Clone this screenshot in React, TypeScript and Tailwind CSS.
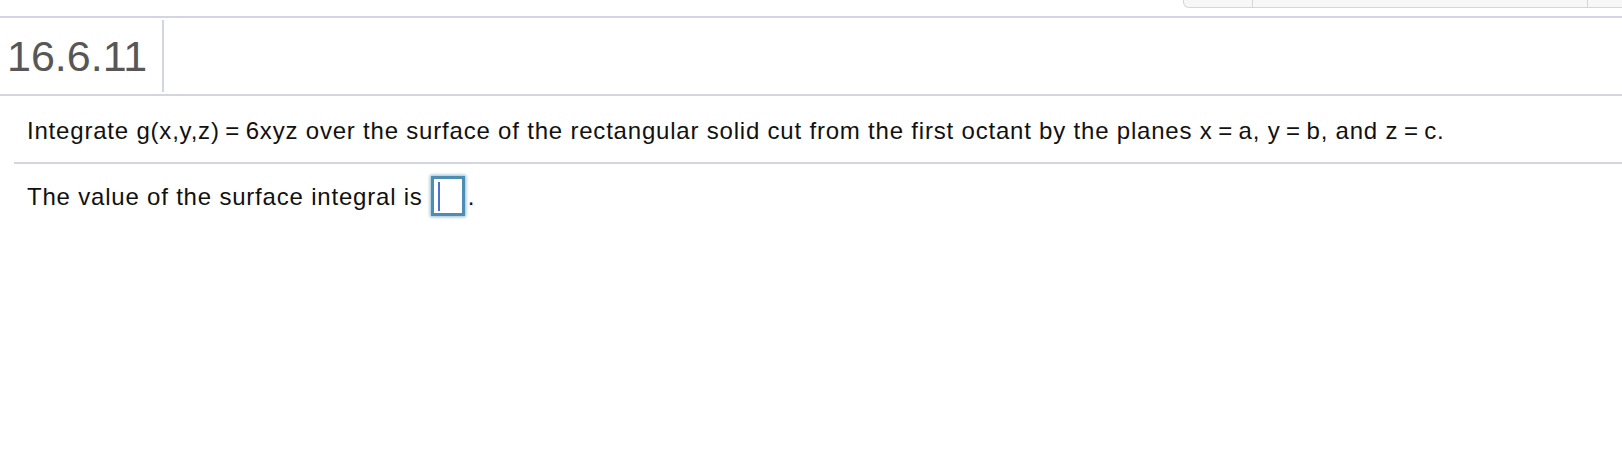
export default function App() {
  return (
    <div className="w-[1622px] h-[460px] bg-white overflow-hidden font-['Liberation_Sans',Arial,sans-serif] text-[#111]">
      {/* toolbar remnant */}
      <div className="h-[16px] flex justify-end">
        <div className="ml-auto mr-[-20px] w-[459px] h-[8px] flex bg-[#f7f7f7] border border-t-0 border-[#d6d6d6] rounded-bl-[6px]">
          <div className="w-[69px] border-r border-[#d6d6d6]" />
          <div className="w-[335px] border-r border-[#d6d6d6]" />
          <div className="flex-1" />
        </div>
      </div>
      <div className="h-[2px] bg-[#d3d6e0]" />

      {/* header */}
      <div className="h-[76px] flex items-center">
        <div className="w-[164px] h-[72px] flex items-center border-r-2 border-[#d3d6e0] pl-[7px]">
          <span className="text-[43px] leading-none text-[#575757]">16.6.11</span>
        </div>
      </div>
      <div className="h-[2px] bg-[#d3d6e0]" />

      {/* question */}
      <div className="pl-[27px] pt-[21px] pb-[17px] text-[24px] leading-[28px] tracking-[0.8px]">
        Integrate g(x,y,z)&thinsp;=&thinsp;6xyz over the surface of the rectangular solid cut from the first octant by the planes x&thinsp;=&thinsp;a, y&thinsp;=&thinsp;b, and z&thinsp;=&thinsp;c.
      </div>
      <div className="ml-[14px] h-[2px] bg-[#d3d6e0]" />

      {/* answer */}
      <div className="pl-[27px] pt-[12px] flex items-start text-[24px] leading-[28px] tracking-[0.8px]">
        <span className="mt-[7px]">The value of the surface integral is</span>
        <span className="ml-[8px] w-[34px] h-[40px] border-[3px] border-[#4d8db1] shadow-[0_0_3px_1px_rgba(77,141,177,0.6)] bg-white flex items-center pl-[4px]">
          <span className="w-[2px] h-[29px] bg-[#4a6fd8]" />
        </span>
        <span className="ml-[3px] mt-[7px]">.</span>
      </div>
    </div>
  );
}
